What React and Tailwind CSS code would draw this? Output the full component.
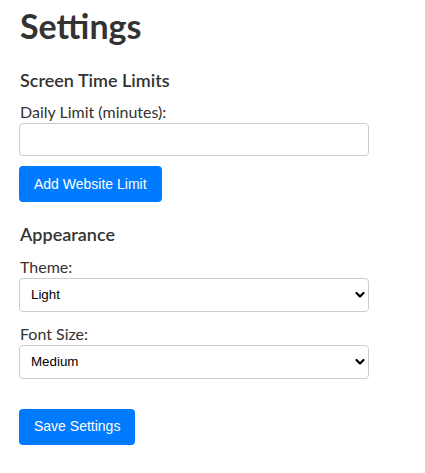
import React from "react";

function Chevron() {
  return (
    <svg className="pointer-events-none absolute right-[4px] top-1/2 -translate-y-1/2" width="10" height="7" viewBox="0 0 10 7">
      <path d="M1.5 1.5 L5 5 L8.5 1.5" fill="none" stroke="#000" strokeWidth="2.2" strokeLinecap="round" strokeLinejoin="round" />
    </svg>
  );
}

function Select({ value }) {
  return (
    <div className="relative w-[350px]">
      <select
        defaultValue={value}
        className="appearance-none w-full h-[34px] rounded-[4px] border border-[#ccc] bg-white pl-[11px] text-[13.33px] text-black font-['Liberation_Sans',Arial,sans-serif] outline-none"
      >
        <option>{value}</option>
      </select>
      <Chevron />
    </div>
  );
}

export default function App() {
  return (
    <div className="pl-[19px] text-[#333] font-['Lato','Open_Sans',sans-serif]">
      <h1 className="text-[34px] font-bold leading-[40px] mt-[6px] mb-0 pl-[1px]">Settings</h1>
      <h2 className="text-[18px] font-semibold mt-[23px] leading-[1.3] pl-[1px]">Screen Time Limits</h2>
      <label className="block text-[16px] mt-[10px] leading-[1.25] pl-[1px]">Daily Limit (minutes):</label>
      <input type="text" className="block w-[350px] h-[33px] mt-[1px] rounded-[4px] border border-[#ccc] bg-white outline-none" />
      <button className="mt-[10px] h-[36px] px-[15px] rounded-[4px] bg-[#007bff] text-white text-[14px] font-['Liberation_Sans',Arial,sans-serif]">
        Add Website Limit
      </button>
      <h2 className="text-[18px] font-semibold mt-[21px] leading-[1.3] pl-[1px]">Appearance</h2>
      <label className="block text-[16px] mt-[10px] leading-[1.25] pl-[1px]">Theme:</label>
      <div className="mt-[1px]"><Select value="Light" /></div>
      <label className="block text-[16px] mt-[12px] leading-[1.25] pl-[1px]">Font Size:</label>
      <div className="mt-[1px]"><Select value="Medium" /></div>
      <button className="mt-[30px] h-[36px] px-[15px] rounded-[4px] bg-[#007bff] text-white text-[14px] font-['Liberation_Sans',Arial,sans-serif]">
        Save Settings
      </button>
    </div>
  );
}
